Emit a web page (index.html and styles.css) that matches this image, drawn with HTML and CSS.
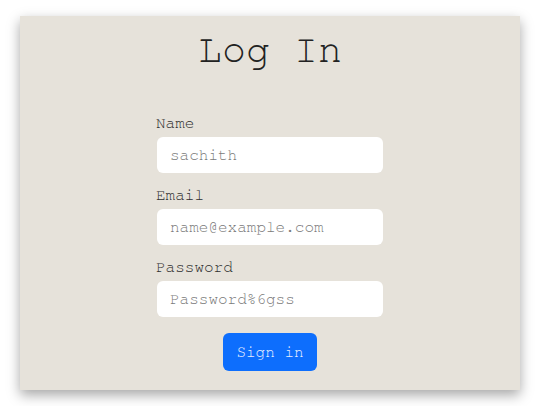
FILE: index.html
```html
<!DOCTYPE html>
<html lang="en">
<head>
<meta charset="utf-8">
<title>Log In</title>
<link rel="stylesheet" href="styles.css">
</head>
<body>
<div class="page">
  <div class="card">
    <h1 class="title">Log In</h1>
    <form class="form">
      <div class="group">
        <label class="label" for="name">Name</label>
        <input class="input" id="name" type="text" placeholder="sachith">
      </div>
      <div class="group">
        <label class="label" for="email">Email</label>
        <input class="input" id="email" type="email" placeholder="name@example.com">
      </div>
      <div class="group">
        <label class="label" for="pw">Password</label>
        <input class="input" id="pw" type="text" placeholder="Password%6gss">
      </div>
      <div class="actions">
        <button class="btn" type="button">Sign in</button>
      </div>
    </form>
  </div>
</div>
</body>
</html>
```

FILE: styles.css
```css
* { box-sizing: border-box; }
html, body { margin: 0; padding: 0; background: #fff; }
body { font-family: "Nimbus Mono PS", "FreeMono", "Courier New", "Liberation Mono", monospace; }
.page { padding: 16px 20px; }
.card {
  width: 500px;
  height: 374px;
  background: #e6e2da;
  box-shadow: 0 5px 12px rgba(0,0,0,0.35);
  padding-top: 10px;
  display: flex;
  flex-direction: column;
  align-items: center;
}
.title {
  margin: 0;
  font-size: 40px;
  font-weight: normal;
  line-height: 48px;
  color: #222;
}
.form {
  width: 226px;
  margin-top: 39px;
  display: flex;
  flex-direction: column;
  gap: 12px;
}
.group { display: flex; flex-direction: column; }
.label {
  font-size: 16px;
  line-height: 20px;
  margin-bottom: 4px;
  color: #2e2e2e;
  margin-left: -1px;
}
.input {
  height: 36px;
  border: none;
  border-radius: 6px;
  background: #fff;
  padding: 0 13px;
  font-family: inherit;
  font-size: 16px;
  color: #333;
  outline: none;
}
.input::placeholder { color: #7a7a7a; }
.actions { display: flex; justify-content: center; margin-top: 4px; }
.btn {
  height: 38px;
  width: 94px;
  border: none;
  border-radius: 6px;
  background: #0d6efd;
  color: #e8efff;
  font-family: inherit;
  font-size: 16px;
  padding: 0;
}
```
